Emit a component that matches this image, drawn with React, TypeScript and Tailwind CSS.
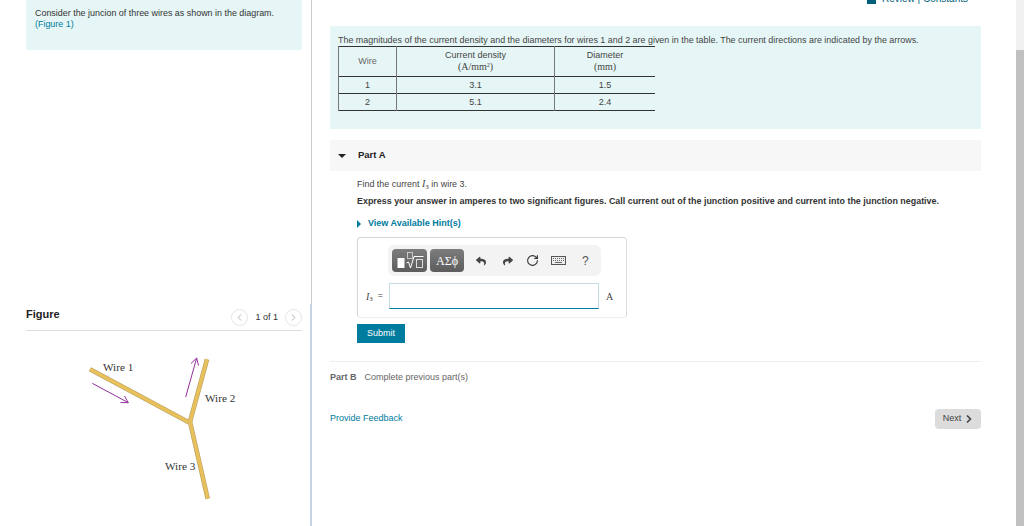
import React from "react";
import { ChevronLeft, ChevronRight, RotateCw } from "lucide-react";
import { FaReply, FaShare } from "react-icons/fa";

const serif = "font-['Liberation_Serif',serif]";

const WireDiagram = () => (
  <svg viewBox="26 340 276 170" className="block h-[170px] w-[276px]">
    <g stroke="#b8a060" strokeWidth="4.6" fill="none">
      <path d="M90 369.3L188.7 422.3" />
      <path d="M207 359.3L190 421.7" />
      <path d="M190 421.7L207.7 498.7" />
    </g>
    <g stroke="#e8c05c" strokeWidth="3.4" fill="none">
      <path d="M90 369.3L188.7 422.3" />
      <path d="M207 359.3L190 421.7" />
      <path d="M190 421.7L207.7 498.7" />
    </g>
    <g stroke="#93309c" strokeWidth="1" fill="none">
      <path d="M92.3 383.3L128.3 402.7" />
      <path d="M120.5 402.5L128.3 402.7L124.5 396" />
      <path d="M185.7 397L196.7 358" />
      <path d="M191 363.5L196.7 358L198.5 365.5" />
    </g>
    <g fontFamily="'Liberation Serif', serif" fontSize="11.2" fill="#333">
      <text x="103" y="371">Wire 1</text>
      <text x="205" y="402">Wire 2</text>
      <text x="165" y="470">Wire 3</text>
    </g>
  </svg>
);

const Current = () => (
  <span className={`${serif} text-[10px] italic`}>
    I<sub className="text-[7px] not-italic">3</sub>
  </span>
);

const RadicalIcon = () => (
  <svg width="35" height="23" viewBox="0 0 35 23" className="block">
    <rect x="5.5" y="9" width="7" height="10" fill="#fff" />
    <path d="M14.5 14l2 -1l2 6l3.5 -11.5h9.5" stroke="#fff" strokeWidth="1" fill="none" />
    <rect x="15.5" y="3.5" width="5" height="6" stroke="#ddd" strokeWidth="0.8" fill="none" />
    <rect x="24.5" y="10.5" width="6" height="8" stroke="#ddd" strokeWidth="1" fill="none" />
  </svg>
);

const KeyboardIcon = () => (
  <svg width="15" height="9" viewBox="0 0 15 9" className="block">
    <rect x="0.5" y="0.5" width="14" height="8" fill="#eee" stroke="#555" />
    <path d="M2 2.5h11M2 4.5h11" stroke="#666" strokeDasharray="1 1" />
    <path d="M4 6.5h7" stroke="#666" />
  </svg>
);

const DataTable = () => (
  <table className="ml-2 w-[317px] table-fixed border-collapse text-center text-[9px] leading-[11px] text-[#444]">
    <colgroup>
      <col className="w-[58px]" />
      <col className="w-[158px]" />
      <col />
    </colgroup>
    <tbody>
      <tr className="h-[30px] border-y border-[#333]">
        <td className="border-l border-[#777] text-[#666]">Wire</td>
        <td className="border-x border-[#777] pb-[2px]">
          Current density
          <div className={`${serif} text-[10px]`}>
            (A/mm<sup className="text-[6px]">2</sup>)
          </div>
        </td>
        <td className="pb-[2px]">
          Diameter
          <div className={`${serif} text-[10px]`}>(mm)</div>
        </td>
      </tr>
      <tr className="h-[17px] border-b border-[#333]">
        <td className="border-l border-[#777]">1</td>
        <td className="border-x border-[#777]">3.1</td>
        <td>1.5</td>
      </tr>
      <tr className="h-[17px] border-b border-[#333]">
        <td className="border-l border-[#777]">2</td>
        <td className="border-x border-[#777]">5.1</td>
        <td>2.4</td>
      </tr>
    </tbody>
  </table>
);

const AnswerBox = () => (
  <div className="ml-[27px] mt-[8px] h-[81px] w-[270px] rounded-sm border border-[#d5d5d5] border-b-[#eee] border-r-[#ddd]">
    <div className="ml-[30px] mt-[7px] flex h-[31px] w-[213px] items-center rounded-md bg-[#f3f3f3] pl-1">
      <div className="h-[23px] w-[35px] rounded bg-gradient-to-b from-[#7d7d7d] to-[#5c5c5c]">
        <RadicalIcon />
      </div>
      <div className={`${serif} ml-[3px] flex h-[23px] w-[34px] items-center justify-center rounded bg-gradient-to-b from-[#7d7d7d] to-[#5c5c5c] text-[12px] text-white`}>
        ΑΣϕ
      </div>
      <FaReply className="ml-[12px] text-[10px] text-[#444]" />
      <FaShare className="ml-[17px] text-[10px] text-[#444]" />
      <RotateCw className="ml-[13px] text-[#333]" size={13} strokeWidth={2} />
      <span className="ml-[12px]">
        <KeyboardIcon />
      </span>
      <span className="ml-[16px] text-[12px] text-[#555]">?</span>
    </div>
    <div className="mt-[7px] flex items-center">
      <div className="flex w-[25px] items-center justify-end gap-[5px] text-[9px] text-[#444]">
        <Current />
        <span>=</span>
      </div>
      <div className="ml-[6px] h-[26px] w-[210px] border border-[#c3dde6] border-b-[#007c9e] bg-white" />
      <span className={`${serif} ml-[7px] text-[10px] text-[#444]`}>A</span>
    </div>
  </div>
);

export default function App() {
  return (
    <div className="flex h-[526px] w-full overflow-hidden bg-white font-['Liberation_Sans',sans-serif] text-[#333]">
      {/* Left column */}
      <div className="flex w-[312px] flex-col">
        <div className="h-[304px] border-r border-[#ccc] pl-[26px] pr-[9px]">
          <div className="h-[50px] bg-[#e6f6f6] px-[9px] pt-[8px] text-[8.93px] leading-[11px]">
            Consider the juncion of three wires as shown in the diagram.
            <div className="text-[#007c9e]">(Figure 1)</div>
          </div>
        </div>
        <div className="flex-1 border-r-2 border-[#c5d3e3] pl-[26px] pr-[8px]">
          <div className="flex h-[27px] items-center justify-between border-b border-[#ddd] pb-[2px]">
            <span className="-mt-[4px] font-bold text-[11px] text-[#222]">Figure</span>
            <div className="mt-[2px] flex items-center gap-[7px] text-[9px]">
              <span className="flex h-[17px] w-[17px] items-center justify-center rounded-full border border-[#e5e5e5]">
                <ChevronLeft size={11} className="text-[#aaa]" />
              </span>
              <span className="mt-[1px]">1 of 1</span>
              <span className="flex h-[17px] w-[17px] items-center justify-center rounded-full border border-[#e5e5e5]">
                <ChevronRight size={11} className="text-[#aaa]" />
              </span>
            </div>
          </div>
          <div className="mt-[9px]">
            <WireDiagram />
          </div>
        </div>
      </div>

      {/* Main column */}
      <div className="flex-1 pl-[18px] pr-[35px]">
        <div className="h-[26px] overflow-hidden">
          <div className="-mt-[7px] flex items-center justify-end gap-1 pr-[13px] text-[10px] leading-[11px] text-[#005f7a]">
            <span className="mt-1 h-[7px] w-[9px] bg-[#005f7a]" />
            <span className="ml-[2px]">Review | Constants</span>
          </div>
        </div>

        <div className="h-[103px] bg-[#e6f6f6] pt-[9px]">
          <p className="pl-2 text-[8.93px] leading-[11px] text-[#444]">
            The magnitudes of the current density and the diameters for wires 1 and 2 are given in the table. The current directions are indicated by the arrows.
          </p>
          <DataTable />
        </div>

        <div className="mt-[11px] flex h-[31px] items-center bg-[#f7f7f7] pl-2">
          <span className="h-0 w-0 border-x-[4px] border-t-[4px] border-x-transparent border-t-[#222]" />
          <span className="ml-3 font-bold text-[9.5px] text-[#222]">Part A</span>
        </div>

        <div className="ml-[27px] mt-[7px] text-[8.93px] leading-[11px] text-[#444]">
          Find the current <Current /> in wire 3.
        </div>
        <div className="ml-[27px] mt-[6px] whitespace-nowrap font-bold text-[8.92px] leading-[11px] text-[#333]">
          Express your answer in amperes to two significant figures. Call current out of the junction positive and current into the junction negative.
        </div>
        <div className="ml-[27px] mt-[11px] flex items-center text-[9px] font-bold leading-[11px] text-[#007c9e]">
          <span className="h-0 w-0 border-y-[4px] border-l-[4px] border-y-transparent border-l-[#007c9e]" />
          <span className="ml-[7px]">View Available Hint(s)</span>
        </div>

        <AnswerBox />

        <div className="ml-[27px] mt-[6px] flex h-[19px] w-[48px] items-center justify-center bg-[#007c9e] text-[9px] text-white">
          Submit
        </div>

        <div className="mt-[18px] flex h-[31px] items-center border-t border-[#eee] pt-[1px] text-[9px] text-[#666]">
          <span className="font-bold">Part B</span>
          <span className="ml-2">Complete previous part(s)</span>
        </div>

        <div className="mt-[17px] flex h-[20px] items-center justify-between text-[9px]">
          <span className="text-[#007c9e]">Provide Feedback</span>
          <span className="flex h-[20px] w-[46px] items-center justify-center gap-[2px] rounded-sm bg-[#dcdcdc] pl-[2px] text-[#444]">
            Next
            <ChevronRight size={12} strokeWidth={3.5} />
          </span>
        </div>
      </div>

      {/* Scrollbar */}
      <div className="flex w-2 flex-col bg-[#f1f1f1]">
        <div className="h-[50px]" />
        <div className="flex-1 bg-[#c1c1c1]" />
      </div>
    </div>
  );
}
